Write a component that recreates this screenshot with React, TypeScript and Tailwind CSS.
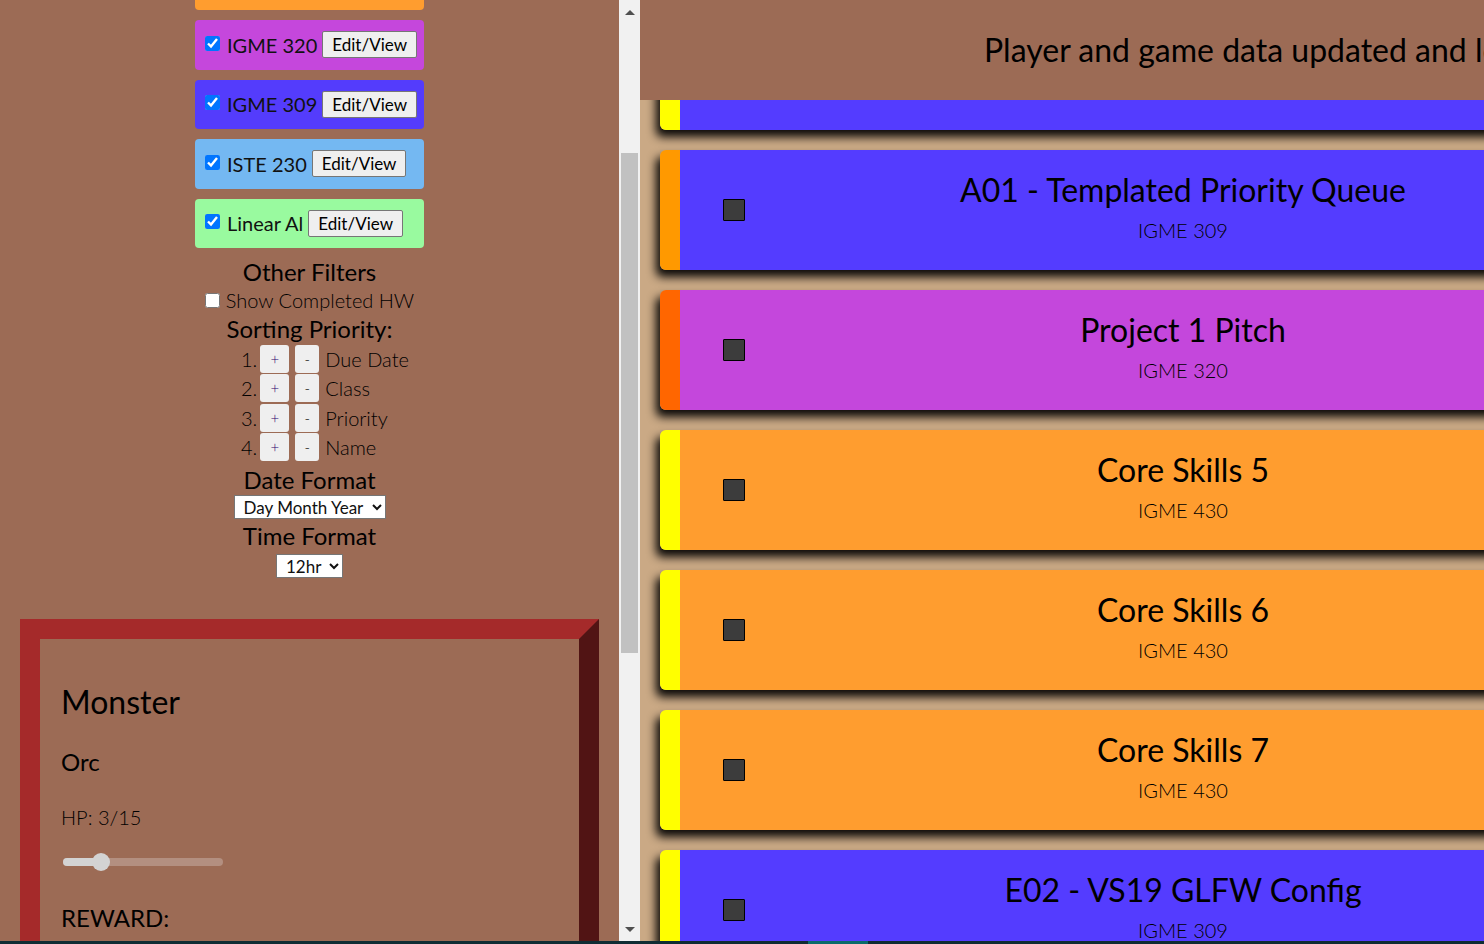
import React from "react";

const classes = [
  { name: "IGME 320", bg: "bg-[#c547dc]" },
  { name: "IGME 309", bg: "bg-[#543cfc]" },
  { name: "ISTE 230", bg: "bg-[#74b8f2]" },
  { name: "Linear Al", bg: "bg-[#99fa9f]" },
];

const sorts = ["Due Date", "Class", "Priority", "Name"];

const cards = [
  { title: "", sub: "", stripe: "bg-[#ffff00]", body: "bg-[#543cff]" },
  { title: "A01 - Templated Priority Queue", sub: "IGME 309", stripe: "bg-[#ff9900]", body: "bg-[#543cff]" },
  { title: "Project 1 Pitch", sub: "IGME 320", stripe: "bg-[#ff6600]", body: "bg-[#c447dc]" },
  { title: "Core Skills 5", sub: "IGME 430", stripe: "bg-[#ffff00]", body: "bg-[#ff9d2f]" },
  { title: "Core Skills 6", sub: "IGME 430", stripe: "bg-[#ffff00]", body: "bg-[#ff9d2f]" },
  { title: "Core Skills 7", sub: "IGME 430", stripe: "bg-[#ffff00]", body: "bg-[#ff9d2f]" },
  { title: "E02 - VS19 GLFW Config", sub: "IGME 309", stripe: "bg-[#ffff00]", body: "bg-[#543cff]" },
];

export default function App() {
  return (
    <div className="w-[1484px] h-[944px] overflow-hidden flex flex-col font-['Lato',sans-serif] text-black bg-[#9c6b55]">
      <div className="flex h-[941px] overflow-hidden">
        {/* Left pane */}
        <div className="w-[619px] h-full overflow-hidden bg-[#9c6b55]">
          <div className="mt-[-39px] flex flex-col items-center">
            <div className="w-[229px] flex flex-col gap-[10px]">
              <div className="h-[49px] rounded-[4px] bg-[#ff9d2f]" />
              {classes.map((c) => (
                <div key={c.name} className={`h-[49.5px] rounded-[4px] ${c.bg} flex items-center pl-[10px]`}>
                  <input type="checkbox" defaultChecked className="w-[15px] h-[15px] m-0 -mt-[3px] accent-[#0075ff]" />
                  <span className="ml-[7px] text-[20px] leading-none text-[#111]">{c.name}</span>
                  <button className="ml-[5px] h-[27px] px-[9px] bg-[#efefef] border border-[#767676] rounded-[2px] text-[17px] leading-none">
                    Edit/View
                  </button>
                </div>
              ))}
            </div>
            <div className="w-[229px] flex flex-col items-center mt-[9px]">
              <div className="text-[24px] leading-[29px]">Other Filters</div>
              <label className="flex items-center gap-[6px] text-[20px] leading-[28px] font-light">
                <input type="checkbox" className="w-[15px] h-[15px] m-0 bg-white" />
                <span className="whitespace-nowrap">Show Completed HW</span>
              </label>
              <div className="text-[24px] leading-[30px]">Sorting Priority:</div>
              <div className="self-start pl-[46px] flex flex-col">
                {sorts.map((s, i) => (
                  <div key={s} className="h-[29.5px] flex items-center text-[20px] font-light">
                    <span className="mr-[3px]">{i + 1}.</span>
                    <button className="w-[29px] h-[28px] bg-[#efefef] rounded-[3px] text-[15px] text-[#2a006a]">+</button>
                    <button className="ml-[6px] w-[24px] h-[28px] bg-[#efefef] rounded-[3px] text-[15px]">-</button>
                    <span className="ml-[6px]">{s}</span>
                  </div>
                ))}
              </div>
              <div className="text-[24px] leading-[30px] mt-[3px]">Date Format</div>
              <select className="h-[24px] bg-white border border-[#767676] text-[17px] leading-none pl-[5px] pr-[4px] text-[#111]">
                <option>Day Month Year</option>
              </select>
              <div className="text-[24px] leading-[30px] mt-[2px]">Time Format</div>
              <select className="mt-[3px] h-[24px] bg-white border border-[#767676] text-[17px] leading-none pl-[5px] pr-[4px] text-[#111]">
                <option>12hr</option>
              </select>
            </div>
            {/* Monster panel */}
            <div className="self-start ml-[20px] mt-[41px] w-[579px] h-[400px] border-[20px] border-t-[#a52a2a] border-l-[#a52a2a] border-r-[#511414] border-b-[#511414] bg-[#9c6b55] pl-[21px] pt-[43px]">
              <div className="text-[32px] leading-[40px]">Monster</div>
              <div className="mt-[25px] text-[24px] leading-[30px]">Orc</div>
              <div className="mt-[28px] text-[20px] leading-[24px] font-light">HP: 3/15</div>
              <div className="mt-[29px] ml-[2px] relative w-[160px] h-[8px] rounded-full bg-[#b38f80]">
                <div className="absolute left-0 top-0 h-[8px] w-[40px] rounded-full bg-[#d3d3d3]" />
                <div className="absolute left-[29px] top-[-5px] w-[18px] h-[18px] rounded-full bg-[#d3d3d3]" />
              </div>
              <div className="mt-[37px] text-[24px] leading-[30px]">REWARD:</div>
            </div>
          </div>
        </div>
        {/* Scrollbar */}
        <div className="w-[21px] h-full bg-[#f1f1f1] flex flex-col items-center">
          <div className="h-[24px] flex items-center justify-center">
            <div className="w-0 h-0 border-l-[5px] border-r-[5px] border-b-[5px] border-l-transparent border-r-transparent border-b-[#505050]" />
          </div>
          <div className="mt-[129px] w-[17px] h-[500px] bg-[#c1c1c1]" />
          <div className="flex-1" />
          <div className="h-[24px] flex items-center justify-center">
            <div className="w-0 h-0 border-l-[5px] border-r-[5px] border-t-[5px] border-l-transparent border-r-transparent border-t-[#505050]" />
          </div>
        </div>
        {/* Right pane */}
        <div className="flex-1 h-full overflow-hidden flex flex-col bg-[#caa985]">
          <div className="h-[100px] shrink-0 bg-[#9c6b55] flex items-center pl-[344px] relative z-10 overflow-hidden">
            <span className="whitespace-nowrap text-[32px]">Player and game data updated and loaded!</span>
          </div>
          <div className="flex-1 overflow-hidden">
            <div className="mt-[-90px] pl-[20px] flex flex-col gap-[20px]">
              {cards.map((c, i) => (
                <div key={i} className="w-[1026px] h-[120px] shrink-0 flex rounded-l-[6px] shadow-[-4px_7px_10px_rgba(0,0,0,0.95)]">
                  <div className={`w-[20px] h-full rounded-l-[6px] ${c.stripe}`} />
                  <div className={`flex-1 h-full ${c.body} flex items-center`}>
                    <div className="ml-[43px] w-[22px] h-[22px] bg-[#3c3c3c] border-[1.5px] border-black rounded-[1px]" />
                    <div className="flex-1 mr-[65px] flex flex-col items-center self-start pt-[20px]">
                      <div className="text-[32px] leading-[40px] whitespace-nowrap">{c.title}</div>
                      <div className="mt-[6px] text-[20px] leading-[28px] font-light">{c.sub}</div>
                    </div>
                  </div>
                </div>
              ))}
            </div>
          </div>
        </div>
      </div>
      <div className="h-[3px] flex bg-[#0f2c33]">
        <div className="ml-[808px] w-[60px] h-full bg-[#0a6b6b]" />
      </div>
    </div>
  );
}
